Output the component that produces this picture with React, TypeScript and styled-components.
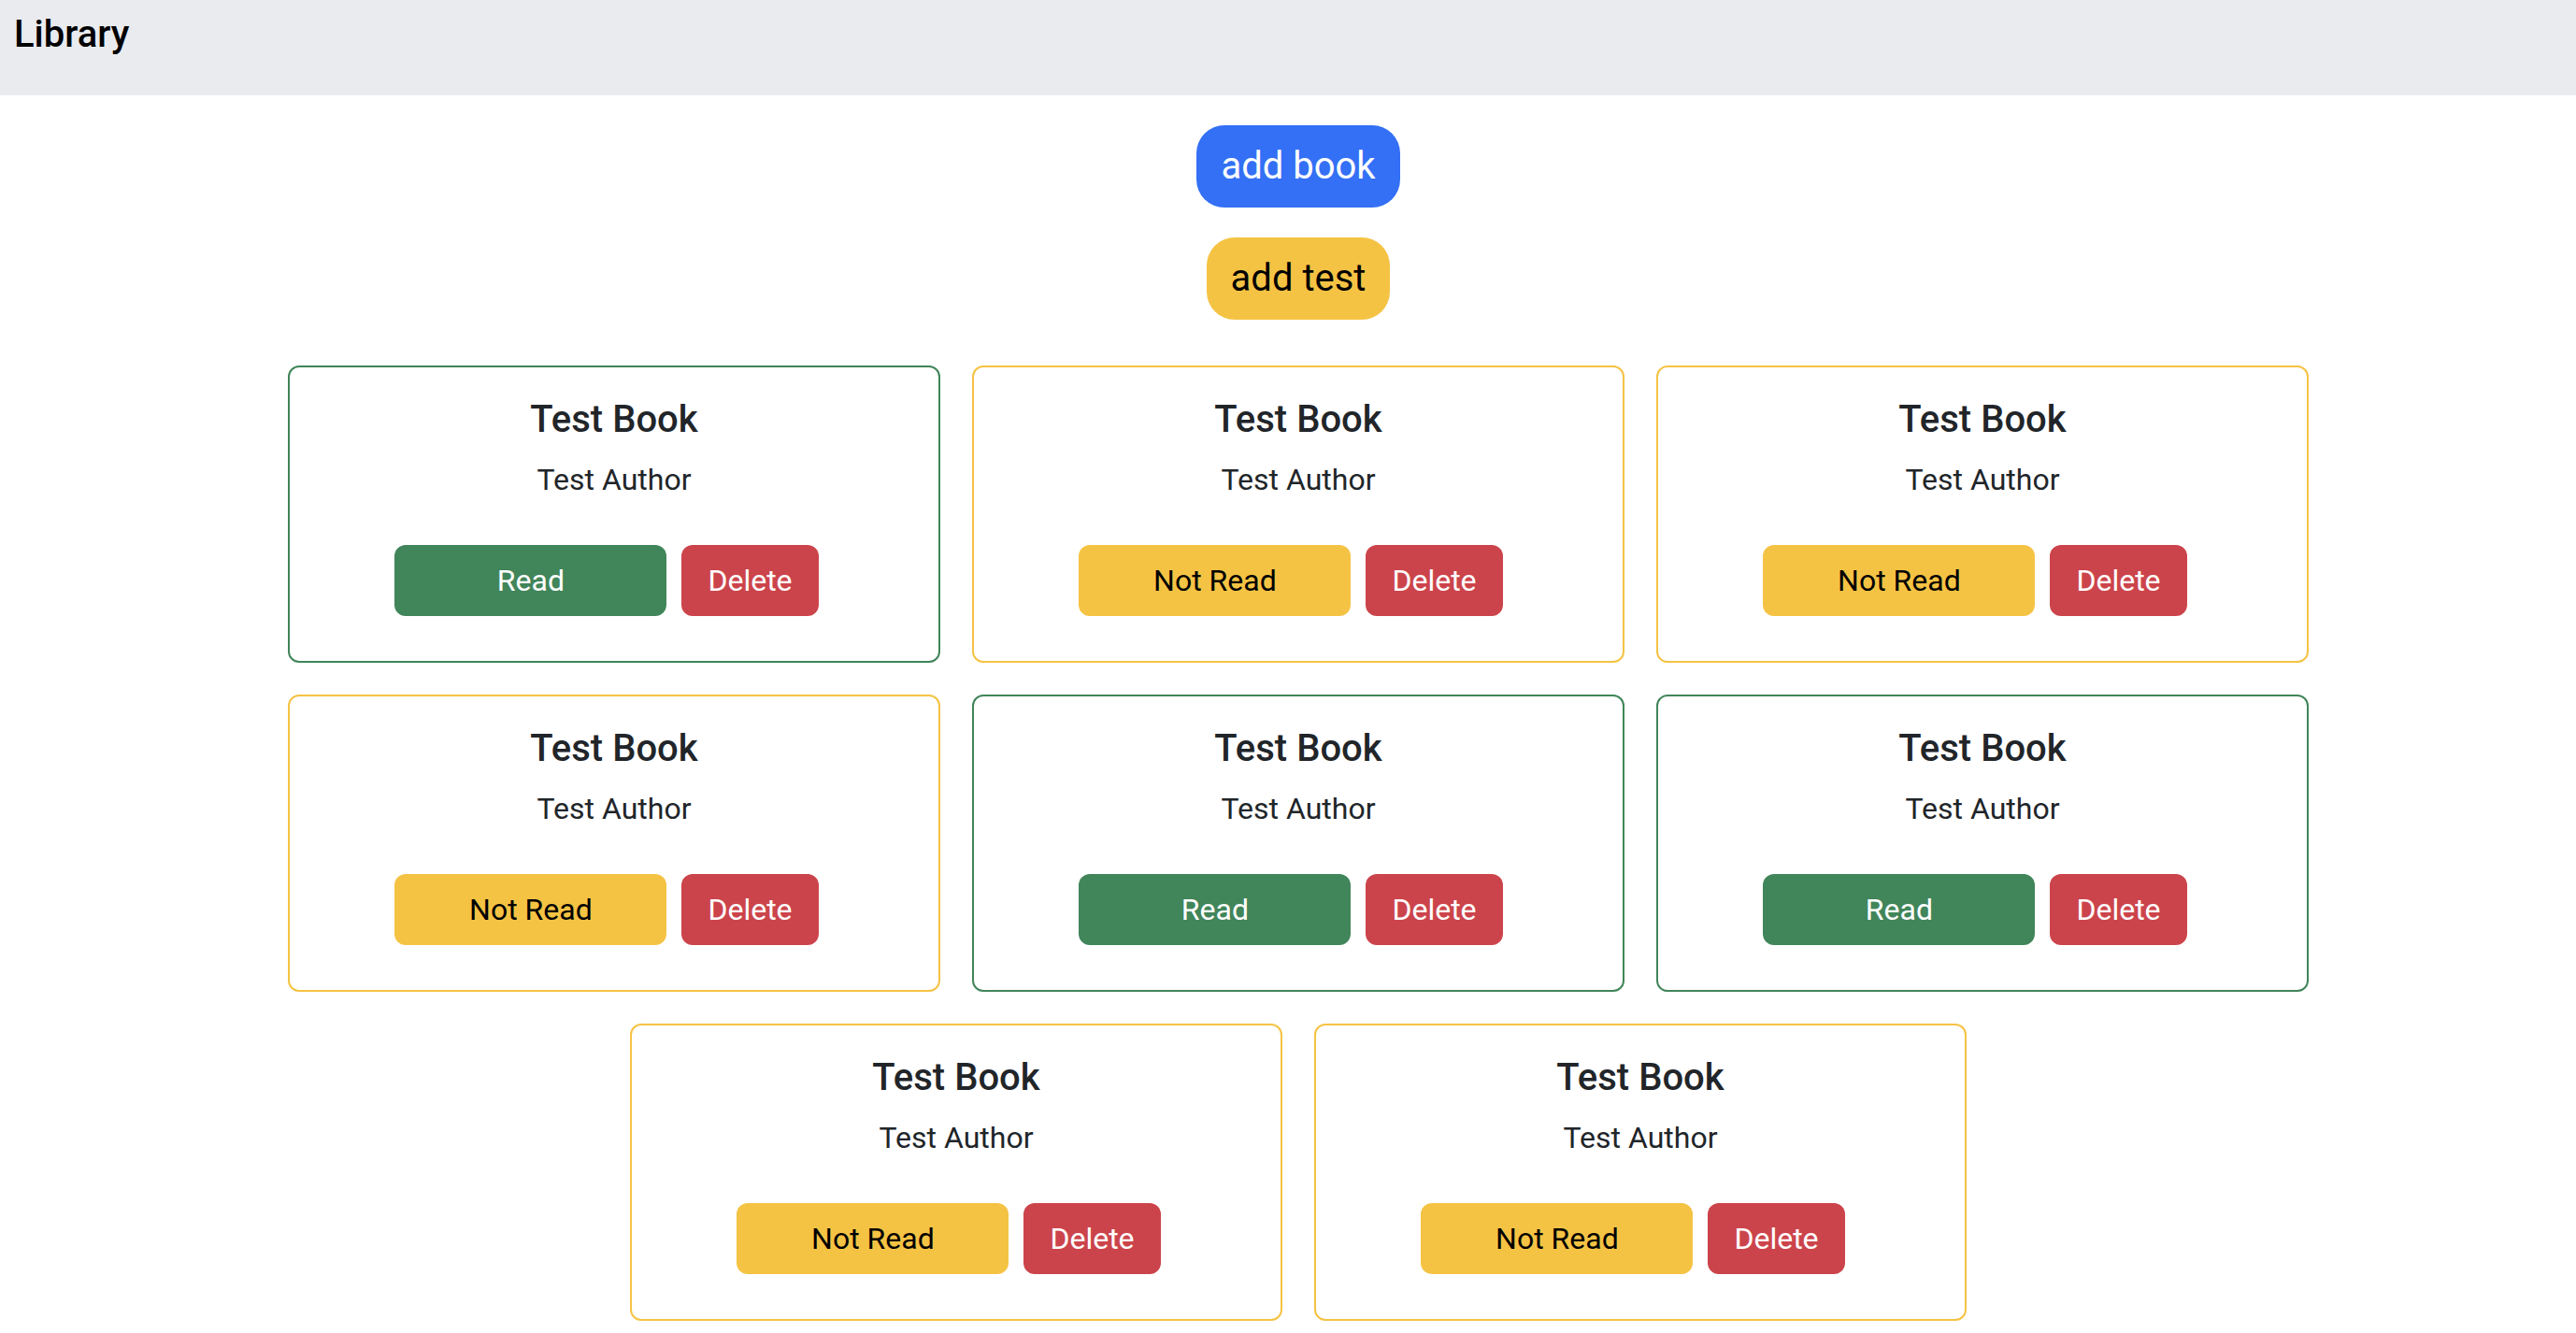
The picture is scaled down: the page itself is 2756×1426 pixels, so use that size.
import React from "react";
import styled, { createGlobalStyle } from "styled-components";

const GlobalStyle = createGlobalStyle`
  html, body {
    margin: 0;
    padding: 0;
    background: #ffffff;
    font-family: Roboto, "Liberation Sans", Arial, sans-serif;
    color: #212529;
  }
  * { box-sizing: border-box; }
`;

const COLORS = {
  green: "#41855a",
  yellow: "#f5c344",
  red: "#cc444b",
  blue: "#3370f5",
};

const Header = styled.header`
  height: 102px;
  background: #e9ebef;
  padding: 7px 15px;
  font-size: 40px;
  font-weight: 500;
  line-height: 60px;
  color: #000000;
`;

const Main = styled.main`
  display: flex;
  flex-direction: column;
  align-items: center;
  padding-left: 22px;
  padding-bottom: 40px;
`;

const PillButton = styled.button<{ $variant: "blue" | "yellow" }>`
  font-family: inherit;
  font-size: 40px;
  line-height: 60px;
  padding: 14px 26px;
  border: none;
  border-radius: 30px;
  cursor: pointer;
  background: ${(p) => (p.$variant === "blue" ? COLORS.blue : COLORS.yellow)};
  color: ${(p) => (p.$variant === "blue" ? "#ffffff" : "#000000")};
  margin-top: 32px;
`;

const CardGrid = styled.div`
  margin-top: 49px;
  width: 100%;
  display: flex;
  flex-wrap: wrap;
  justify-content: center;
  gap: 34px;
`;

const Card = styled.div<{ $read: boolean }>`
  width: 698px;
  border: 2px solid ${(p) => (p.$read ? COLORS.green : COLORS.yellow)};
  border-radius: 12px;
  padding: 32px;
  text-align: center;
  background: #ffffff;
  display: flex;
  flex-direction: column;
`;

const Title = styled.h5`
  margin: 0 0 16px;
  font-size: 40px;
  font-weight: 500;
  line-height: 1.2;
  color: #212529;
`;

const Author = styled.p`
  margin: 0 0 46px;
  font-size: 32px;
  line-height: 1.5;
  color: #212529;
`;

const ButtonRow = styled.div`
  display: flex;
  justify-content: center;
  gap: 16px;
  padding-right: 16px;
  margin-bottom: 16px;
`;

const ActionButton = styled.button<{ $kind: "read" | "unread" | "delete" }>`
  font-family: inherit;
  font-size: 32px;
  line-height: 48px;
  padding: 12px 26px;
  border: 2px solid transparent;
  border-radius: 12px;
  cursor: pointer;
  width: ${(p) => (p.$kind === "delete" ? "auto" : "291px")};
  background: ${(p) =>
    p.$kind === "read" ? COLORS.green : p.$kind === "unread" ? COLORS.yellow : COLORS.red};
  color: ${(p) => (p.$kind === "unread" ? "#000000" : "#ffffff")};
`;

const books = [true, false, false, false, true, true, false, false];

export default function App() {
  return (
    <>
      <GlobalStyle />
      <Header>Library</Header>
      <Main>
        <PillButton $variant="blue">add book</PillButton>
        <PillButton $variant="yellow">add test</PillButton>
        <CardGrid>
          {books.map((read, i) => (
            <Card key={i} $read={read}>
              <Title>Test Book</Title>
              <Author>Test Author</Author>
              <ButtonRow>
                <ActionButton $kind={read ? "read" : "unread"}>
                  {read ? "Read" : "Not Read"}
                </ActionButton>
                <ActionButton $kind="delete">Delete</ActionButton>
              </ButtonRow>
            </Card>
          ))}
        </CardGrid>
      </Main>
    </>
  );
}
